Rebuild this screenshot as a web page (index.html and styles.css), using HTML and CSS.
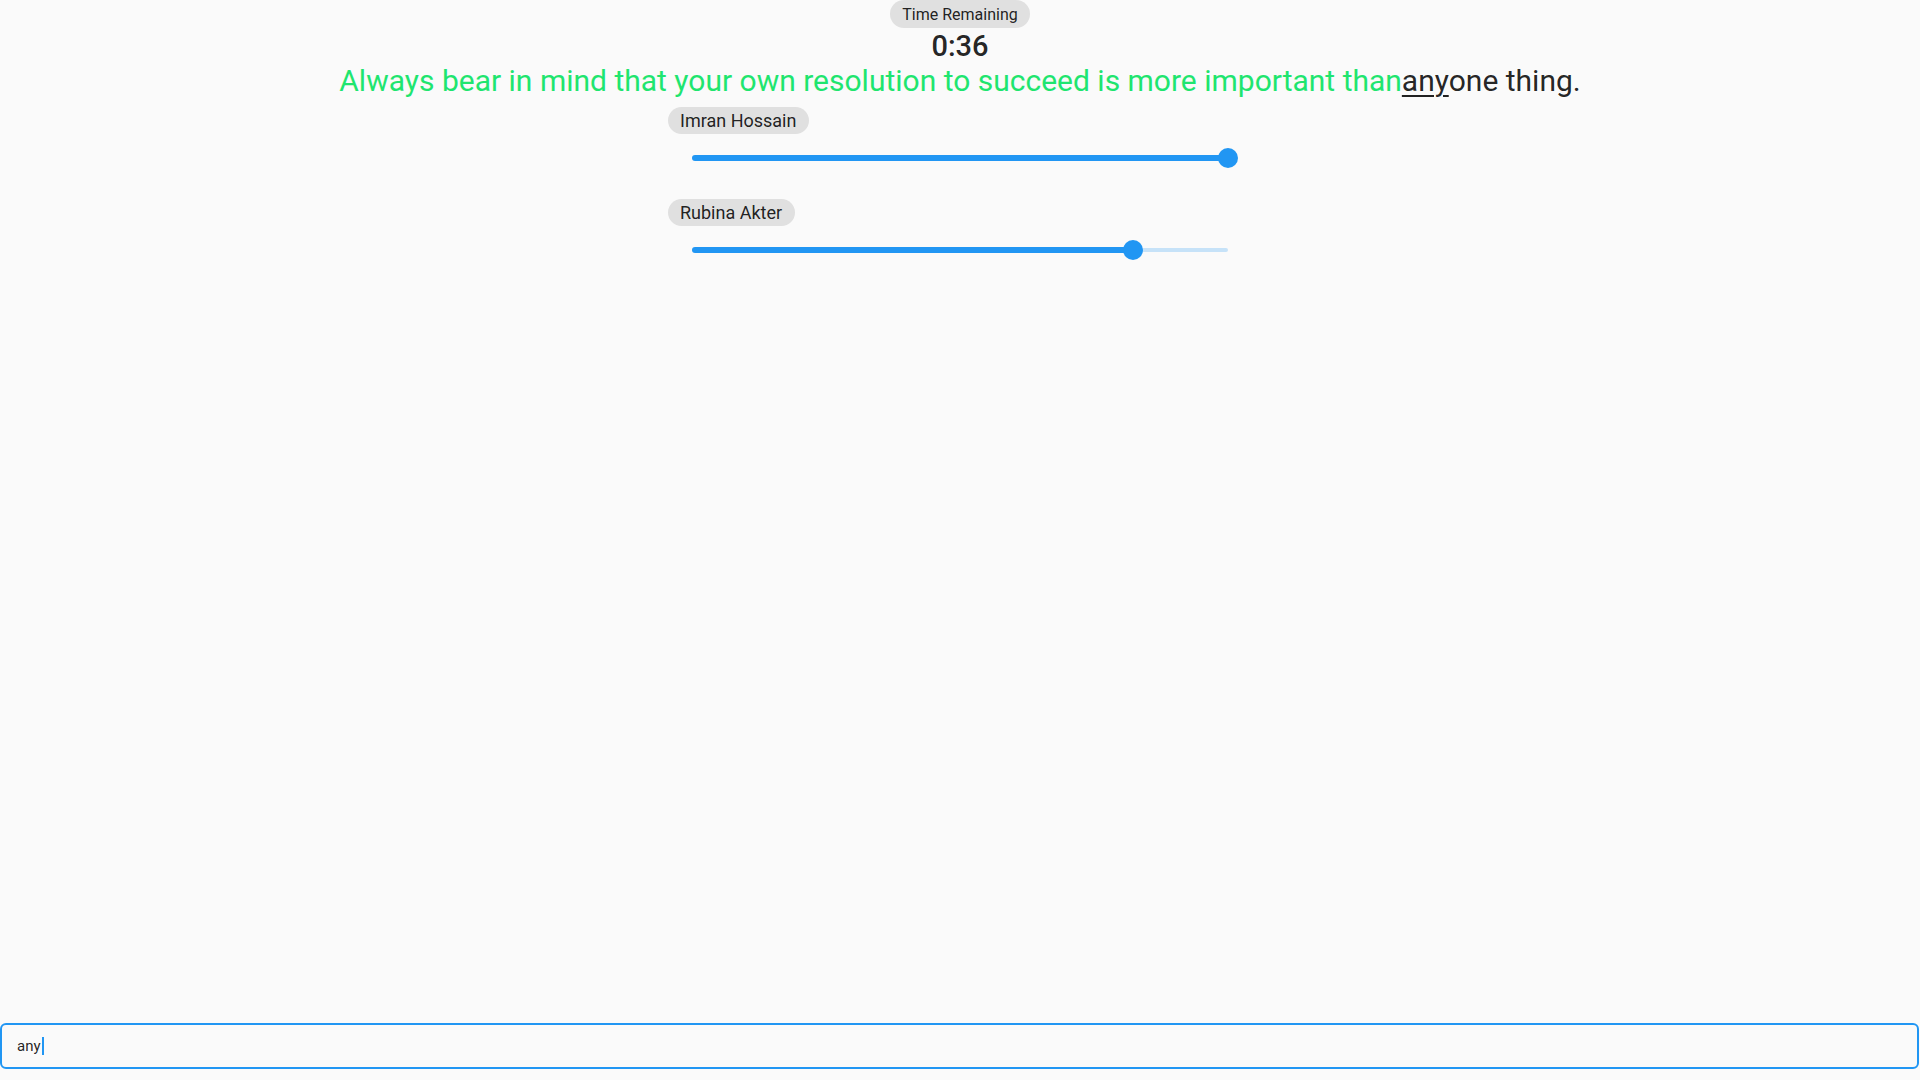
FILE: index.html
```html
<!DOCTYPE html>
<html lang="en">
<head>
<meta charset="utf-8">
<title>Typing Race</title>
<link rel="stylesheet" href="styles.css">
</head>
<body>
<div class="page">
  <header class="top">
    <div class="chip chip-time">Time Remaining</div>
    <div class="timer">0:36</div>
    <p class="sentence"><span class="done">Always bear in mind that your own resolution to succeed is more important than</span><span class="current">any</span><span class="rest">one thing.</span></p>
  </header>
  <section class="players">
    <div class="player">
      <div class="chip chip-name">Imran Hossain</div>
      <div class="slider">
        <div class="track">
          <div class="active" style="width: 100%"></div>
          <div class="inactive"></div>
          <div class="thumb" style="left: 100%"></div>
        </div>
      </div>
    </div>
    <div class="player">
      <div class="chip chip-name">Rubina Akter</div>
      <div class="slider">
        <div class="track">
          <div class="active" style="width: 82.3%"></div>
          <div class="inactive"></div>
          <div class="thumb" style="left: 82.3%"></div>
        </div>
      </div>
    </div>
  </section>
  <div class="input-wrap">
    <div class="input"><span class="typed">any</span><span class="caret"></span></div>
  </div>
</div>
</body>
</html>
```

FILE: styles.css
```css
* { box-sizing: border-box; }
html, body { margin: 0; padding: 0; }
body {
  background: #fafafa;
  font-family: Roboto, "Noto Sans", "Liberation Sans", sans-serif;
  color: rgba(0, 0, 0, 0.87);
}
.page {
  height: 100vh;
  display: flex;
  flex-direction: column;
}
.top {
  display: flex;
  flex-direction: column;
  align-items: center;
}
.chip {
  background: #e0e0e0;
  border-radius: 999px;
  padding: 0 12px;
  white-space: nowrap;
}
.chip-time {
  font-size: 16px;
  height: 28px;
  line-height: 29px;
}
.timer {
  font-size: 29px;
  font-weight: 500;
  line-height: 34px;
  margin-top: 1px;
}
.sentence {
  margin: 1px 0 0;
  font-size: 30px;
  line-height: 34px;
  white-space: nowrap;
}
.done { color: #1fe56f; }
.current { text-decoration: underline; text-decoration-thickness: 1.5px; text-underline-offset: 4px; }
.players {
  width: 584px;
  margin: 9px auto 0;
  display: flex;
  flex-direction: column;
  gap: 17px;
}
.player {
  display: flex;
  flex-direction: column;
  align-items: flex-start;
}
.chip-name {
  font-size: 18px;
  height: 27px;
  line-height: 27px;
  padding: 0 13px 0 12px;
}
.slider {
  align-self: stretch;
  height: 48px;
  padding: 0 24px;
  display: flex;
  align-items: center;
}
.track {
  position: relative;
  flex: 1;
  height: 6px;
  display: flex;
  align-items: center;
}
.active {
  height: 6px;
  background: #2196f3;
  border-radius: 3px 0 0 3px;
}
.inactive {
  flex: 1;
  height: 4px;
  background: #c6e2f8;
  border-radius: 0 2px 2px 0;
}
.thumb {
  position: absolute;
  top: 50%;
  width: 20px;
  height: 20px;
  margin: -10px 0 0 -10px;
  border-radius: 50%;
  background: #2196f3;
}
.input-wrap {
  margin-top: auto;
  padding: 0 1px 11px 0;
}
.input {
  height: 46px;
  border: 2px solid #2196f3;
  border-radius: 6px;
  display: flex;
  align-items: center;
  padding-left: 15px;
  font-size: 15px;
  color: rgba(0, 0, 0, 0.87);
}
.caret {
  width: 2px;
  height: 18px;
  background: #2196f3;
  margin-left: 1px;
}
```
